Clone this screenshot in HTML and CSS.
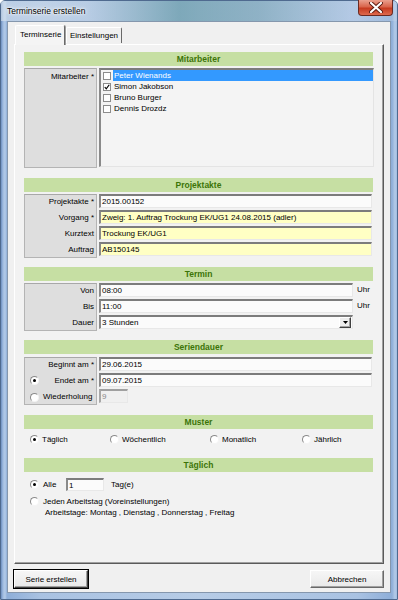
FILE: index.html
```html
<!DOCTYPE html>
<html lang="de">
<head>
<meta charset="utf-8">
<title>Terminserie erstellen</title>
<link rel="stylesheet" href="styles.css">
</head>
<body>
<div class="window">
  <div class="titlebar">
    <span class="title">Terminserie erstellen</span>
    <div class="close">
      <svg width="14" height="11" viewBox="0 0 14 11"><path d="M2 1 L12 10 M12 1 L2 10" stroke="#5a1a10" stroke-width="4" stroke-linecap="round"/><path d="M2 1 L12 10 M12 1 L2 10" stroke="#fff" stroke-width="2.2" stroke-linecap="round"/></svg>
    </div>
  </div>
  <div class="client">
    <div class="tabs">
      <div class="tab active">Terminserie</div>
      <div class="tab">Einstellungen</div>
    </div>
    <div class="panel">
      <section class="sec sec-ma">
        <div class="head">Mitarbeiter</div>
        <div class="body">
          <div class="labels"><div class="lrow top">Mitarbeiter *</div></div>
          <div class="listbox">
            <div class="item sel"><span class="cb"></span><span class="itxt">Peter Wienands</span></div>
            <div class="item"><span class="cb checked"><svg width="8" height="8" viewBox="0 0 8 8"><path d="M1 4 L3 6.5 L7 1" fill="none" stroke="#000" stroke-width="1.6"/></svg></span><span class="itxt">Simon Jakobson</span></div>
            <div class="item"><span class="cb"></span><span class="itxt">Bruno Burger</span></div>
            <div class="item"><span class="cb"></span><span class="itxt">Dennis Drozdz</span></div>
          </div>
        </div>
      </section>

      <section class="sec sec-pa">
        <div class="head">Projektakte</div>
        <div class="body">
          <div class="labels rows4">
            <div class="lrow">Projektakte *</div>
            <div class="lrow">Vorgang *</div>
            <div class="lrow">Kurztext</div>
            <div class="lrow">Auftrag</div>
          </div>
          <div class="fields rows4">
            <div class="input">2015.00152</div>
            <div class="input yellow">Zweig: 1. Auftrag Trockung EK/UG1 24.08.2015 (adler)</div>
            <div class="input yellow">Trockung EK/UG1</div>
            <div class="input yellow">AB150145</div>
          </div>
        </div>
      </section>

      <section class="sec sec-te">
        <div class="head">Termin</div>
        <div class="body">
          <div class="labels rows3">
            <div class="lrow">Von</div>
            <div class="lrow">Bis</div>
            <div class="lrow">Dauer</div>
          </div>
          <div class="fields rows3 narrow">
            <div class="frow"><div class="input grow">08:00</div><span class="unit">Uhr</span></div>
            <div class="frow"><div class="input grow">11:00</div><span class="unit">Uhr</span></div>
            <div class="frow"><div class="input grow combo"><span>3 Stunden</span><span class="arrow"><svg width="5" height="3" viewBox="0 0 5 3"><path d="M0 0 H5 L2.5 3 Z" fill="#000"/></svg></span></div><span class="unit"></span></div>
          </div>
        </div>
      </section>

      <section class="sec sec-sd">
        <div class="head">Seriendauer</div>
        <div class="body">
          <div class="labels rows3">
            <div class="lrow">Beginnt am *</div>
            <div class="lrow"><span class="radio on abs-radio"></span>Endet am *</div>
            <div class="lrow left"><span class="radio"></span>Wiederholung</div>
          </div>
          <div class="fields rows3">
            <div class="input">29.06.2015</div>
            <div class="input">09.07.2015</div>
            <div class="frow"><div class="input small disabled">9</div></div>
          </div>
        </div>
      </section>

      <section class="sec sec-mu">
        <div class="head">Muster</div>
        <div class="radios">
          <label class="ropt"><span class="radio on"></span>Täglich</label>
          <label class="ropt"><span class="radio"></span>Wöchentlich</label>
          <label class="ropt"><span class="radio"></span>Monatlich</label>
          <label class="ropt"><span class="radio"></span>Jährlich</label>
        </div>
      </section>

      <section class="sec sec-tg">
        <div class="head">Täglich</div>
        <div class="daily">
          <div class="drow"><span class="radio on"></span><span class="alle">Alle</span><div class="input days">1</div><span>Tag(e)</span></div>
          <div class="drow d2"><span class="radio"></span><span>Jeden Arbeitstag (Voreinstellungen)</span></div>
          <div class="drow d3">Arbeitstage: Montag , Dienstag , Donnerstag , Freitag</div>
        </div>
      </section>
    </div>
    <div class="buttons">
      <button class="btn default">Serie erstellen</button>
      <button class="btn">Abbrechen</button>
    </div>
  </div>
</div>
</body>
</html>
```

FILE: styles.css
```css
* { box-sizing: border-box; }
html, body { margin: 0; padding: 0; }
body {
  font-family: "Liberation Sans", Arial, sans-serif;
  font-size: 8px;
  color: #000;
  width: 398px;
  height: 600px;
  overflow: hidden;
}
.window {
  width: 398px;
  height: 600px;
  display: flex;
  flex-direction: column;
  background: linear-gradient(90deg, #6d8fc0 0px, #9fbbe0 2px, #b4cbe8 4px, #8eaed8 6px, #a9c2e2 10%, #b7cce6 50%, #a9c2e2 90%, #8eaed8 391px, #b4cbe8 394px, #9fbbe0 396px, #6d8fc0 398px);
  border: 1px solid #4f6a8f;
  border-radius: 5px 5px 0 0;
}
.titlebar {
  height: 20px;
  flex: none;
  display: flex;
  align-items: flex-start;
  justify-content: space-between;
  padding-left: 6px;
  background: linear-gradient(90deg, rgba(220,230,240,0.6) 0%, rgba(200,215,230,0.4) 22%, rgba(80,140,150,0.55) 45%, rgba(100,150,160,0.45) 65%, rgba(200,215,232,0.3) 88%);
}
.title {
  font-size: 8.5px;
  line-height: 21px;
  color: #000;
  text-shadow: 0 0 6px #fff, 0 0 3px #fff, 0 0 2px #fff;
}
.close {
  width: 35px;
  height: 16px;
  margin-right: 4px;
  margin-top: -1px;
  border: 1px solid #6b2a22;
  border-top: none;
  border-radius: 0 0 4px 4px;
  background: linear-gradient(180deg, #eaa08e 0%, #d9654c 45%, #c63b20 55%, #de6a4e 100%);
  display: flex;
  align-items: center;
  justify-content: center;
}
.client {
  flex: 1;
  margin: 0 6px 6px 6px;
  border: 1px solid #8597ad;
  background: #f0f0f0;
  display: flex;
  flex-direction: column;
}
.tabs {
  height: 22px;
  flex: none;
  display: flex;
  align-items: flex-end;
  padding-left: 7px;
  position: relative;
  z-index: 1;
}
.tab {
  height: 16px;
  line-height: 15px;
  padding: 0 3px;
  border-top: 1px solid #fff;
  border-left: 1px solid #fff;
  border-right: 1px solid #696969;
  border-radius: 2px 2px 0 0;
  background: #f0f0f0;
  margin-bottom: 1px;
}
.tab.active {
  height: 20px;
  line-height: 17px;
  padding: 0 4px;
  margin-bottom: -1px;
  width: 50px;
  box-shadow: 1px 0 0 #a0a0a0;
  background: #f4f4f4;
}
.tab:not(.active) { margin-left: 1px; }
.panel {
  height: 520px;
  flex: none;
  margin: 0 6px;
  border-top: 1px solid #fff;
  border-left: 1px solid #fff;
  border-right: 1px solid #5a5a5a;
  border-bottom: 1px solid #5a5a5a;
  box-shadow: inset -1px -1px 0 #a0a0a0;
  background: #f2f2f2;
  padding: 7px 9px 0 9px;
}
.sec { display: flex; flex-direction: column; }
.head {
  height: 14px;
  line-height: 14px;
  background: #c6dfa3;
  color: #3c7408;
  font-weight: bold;
  text-align: center;
  font-size: 8.5px;
  margin-right: 1px;
}
.body {
  display: flex;
  gap: 2px;
  margin-top: 2px;
}
.labels {
  width: 73px;
  flex: none;
  background: #dedede;
  border: 1px solid #b4b4b4;
  border-top-color: #a8a8a8;
  display: flex;
  flex-direction: column;
  padding-right: 2px;
}
.lrow {
  height: 14px;
  line-height: 14px;
  text-align: right;
  position: relative;
}
.lrow.top { margin-top: 1px; }
.lrow.left { text-align: left; padding-left: 5px; display: flex; align-items: center; gap: 4px; }
.rows4 { gap: 2px; }
.rows3 { gap: 2px; }
.fields {
  flex: 1;
  display: flex;
  flex-direction: column;
  padding-right: 2px;
}
.fields.narrow { padding-right: 0; }
.input {
  height: 14px;
  line-height: 12px;
  background: #fbfbfb;
  border-top: 2px solid #7c7c7c;
  border-left: 2px solid #8a8a8a;
  border-right: 1px solid #e8e8e8;
  border-bottom: 1px solid #e8e8e8;
  padding-left: 1px;
  white-space: nowrap;
  overflow: hidden;
}
.input.yellow { background: #ffffc4; }
.frow { display: flex; align-items: flex-start; height: 14px; }
.input.grow { flex: 1; }
.unit { width: 21px; flex: none; padding-left: 4px; line-height: 14px; }
.combo { display: flex; justify-content: space-between; align-items: center; padding-right: 1px; }
.arrow {
  width: 12px;
  height: 11px;
  background: #ececec;
  border: 1px solid #fff;
  border-right-color: #404040;
  border-bottom-color: #404040;
  box-shadow: inset -1px -1px 0 #a0a0a0;
  display: flex;
  align-items: center;
  justify-content: center;
}
.input.small { width: 29px; }
.input.disabled { color: #8a8a8a; background: #f0f0f0; border-top-color: #a0a0a0; border-left-color: #a8a8a8; }

/* Mitarbeiter */
.sec-ma .labels { height: 100px; }
.listbox {
  flex: 1;
  height: 99px;
  background: #f4f4f4;
  border-top: 2px solid #7c7c7c;
  border-left: 2px solid #8a8a8a;
  border-right: 1px solid #e4e4e4;
  border-bottom: 1px solid #e4e4e4;
  padding: 0 0 0 2px;
}
.item {
  height: 11px;
  display: flex;
  align-items: center;
}
.cb {
  width: 8px;
  height: 8px;
  border: 1px solid #8c8c8c;
  background: #fff;
  flex: none;
  margin-right: 2px;
  display: flex;
  align-items: center;
  justify-content: center;
}
.cb svg { display: block; }
.itxt { flex: 1; height: 11px; line-height: 11px; padding-left: 1px; }
.item.sel .itxt { background: #3399ff; color: #fff; }

.sec-ma { margin-bottom: 10px; }
.sec-pa { margin-bottom: 9px; }
.sec-te { margin-bottom: 9px; }
.sec-sd { margin-bottom: 10px; }
.sec-sd .body { margin-top: 3px; }
.sec-mu { margin-bottom: 10px; }

/* radios */
.radio {
  width: 9px;
  height: 9px;
  border-radius: 50%;
  border: 1px solid;
  border-color: #8a8a8a #f4f4f4 #f4f4f4 #8a8a8a;
  background: #fff;
  display: inline-block;
  flex: none;
  position: relative;
}
.radio.on::after {
  content: "";
  position: absolute;
  left: 2px;
  top: 2px;
  width: 3px;
  height: 3px;
  border-radius: 50%;
  background: #000;
}
.abs-radio { position: absolute; left: 5px; top: 2px; }

.radios {
  height: 18px;
  margin-top: 1px;
  display: grid;
  grid-template-columns: 80px 100px 92px 1fr;
  padding-left: 6px;
  align-items: center;
}
.ropt { display: flex; align-items: center; gap: 3px; }

.daily { padding-left: 6px; margin-top: 5px; }
.drow { display: flex; align-items: center; gap: 4px; height: 14px; }
.alle { width: 19px; }
.input.days { width: 38px; height: 13px; margin-right: 3px; }
.d2 { margin-top: 5px; height: 11px; }
.d3 { padding-left: 15px; height: 11px; }

.buttons {
  display: flex;
  justify-content: space-between;
  padding: 6px 6px 0 6px;
}
.btn {
  font-family: "Liberation Sans", Arial, sans-serif;
  font-size: 8px;
  width: 74px;
  height: 18px;
  padding: 0;
  background: linear-gradient(180deg, #f6f6f6, #e9e9e9);
  border: 1px solid #fff;
  border-right-color: #696969;
  border-bottom-color: #696969;
  box-shadow: inset -1px -1px 0 #a0a0a0;
  color: #000;
}
.btn.default {
  outline: 1px solid #000;
  outline-offset: 0;
  border-color: #fff #404040 #404040 #fff;
}
```
